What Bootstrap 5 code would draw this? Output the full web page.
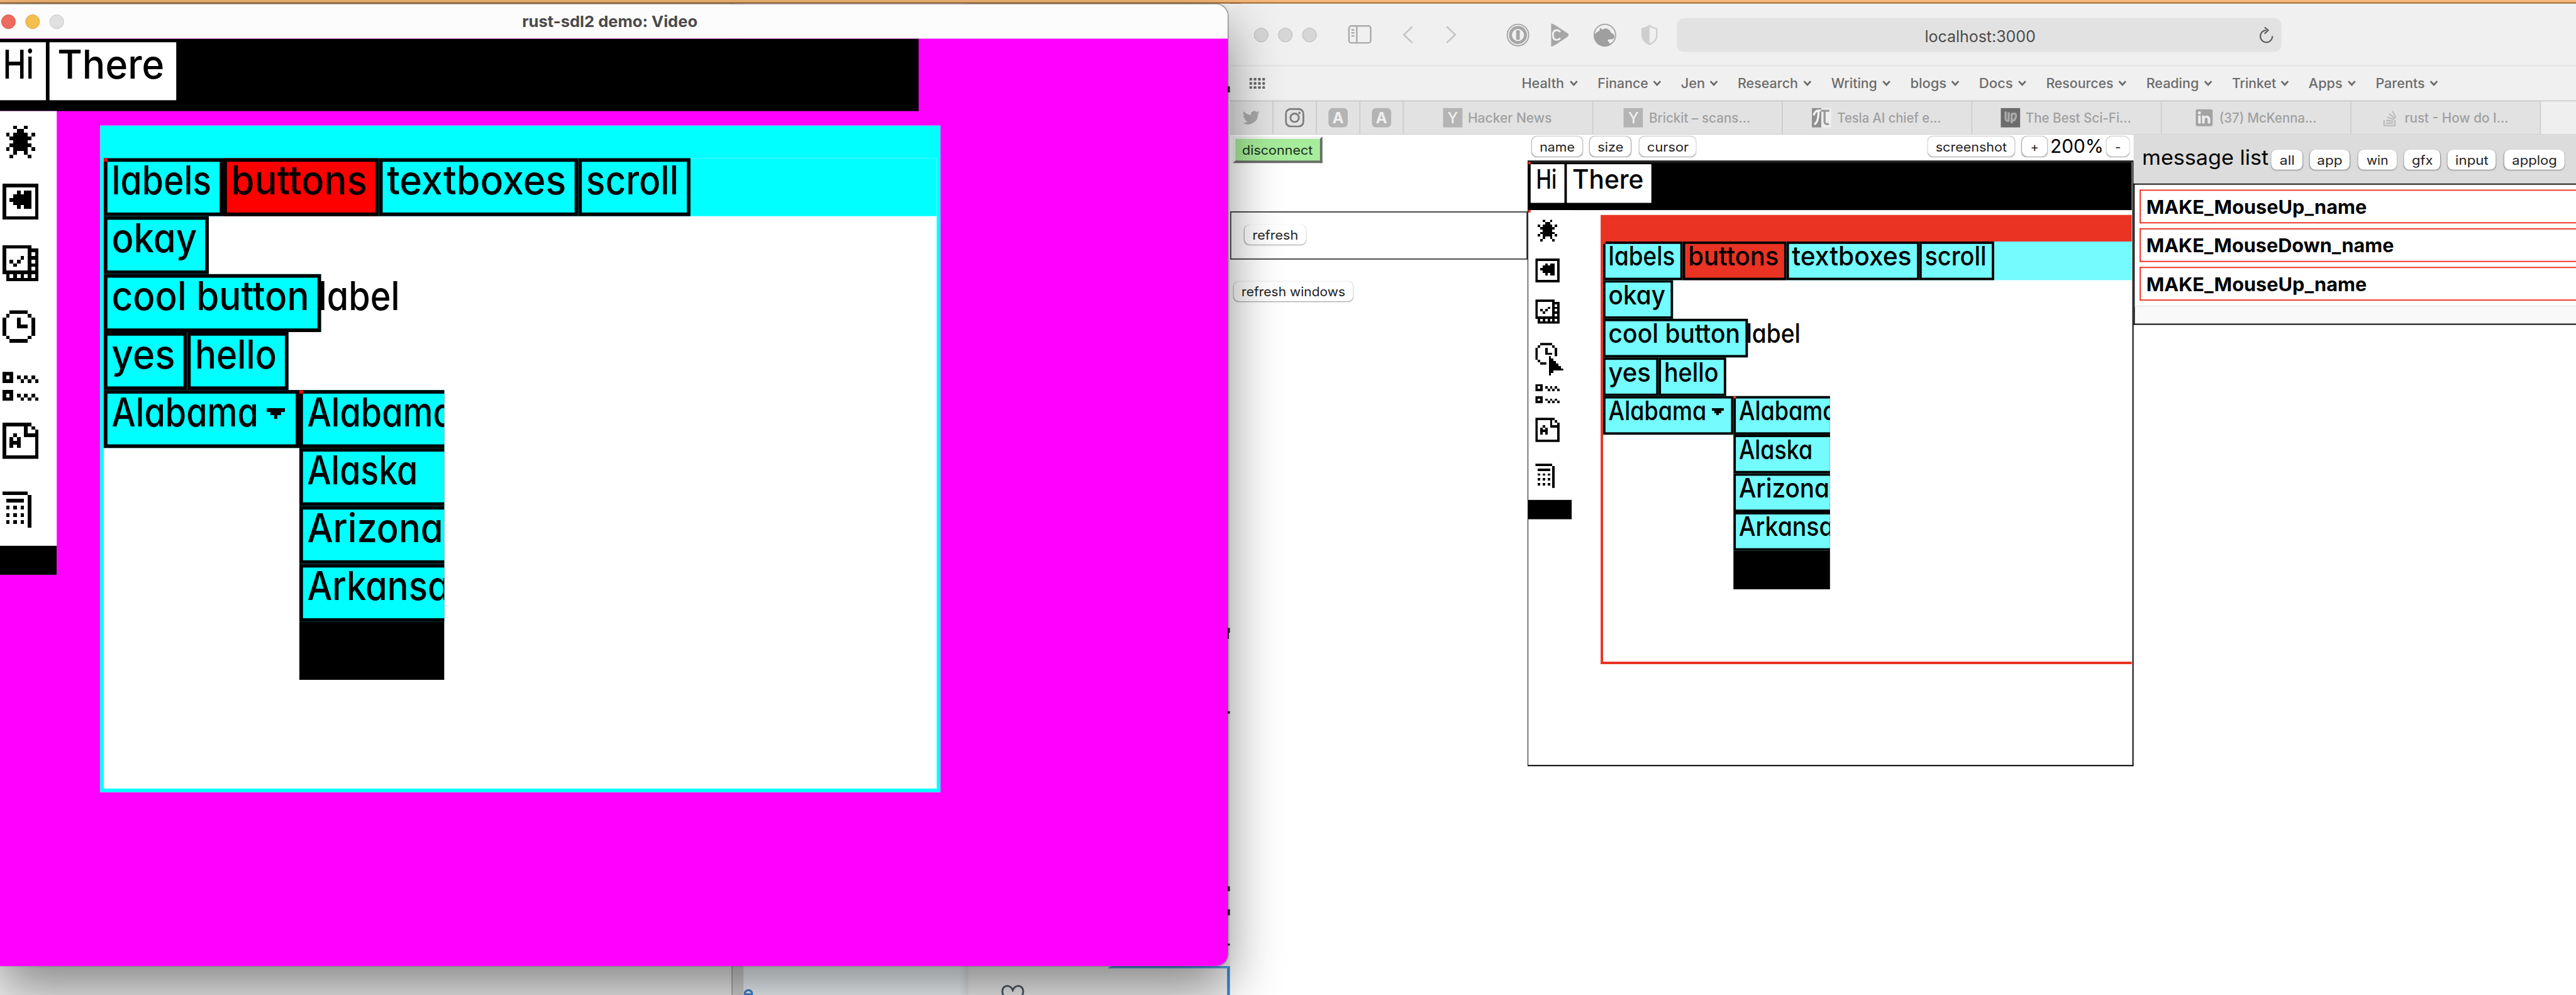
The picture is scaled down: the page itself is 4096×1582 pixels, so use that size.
<!DOCTYPE html>
<html lang="en">
<head>
<meta charset="utf-8">
<title>rust-sdl2 demo</title>
<link href="https://cdn.jsdelivr.net/npm/bootstrap@5.3.0/dist/css/bootstrap.min.css" rel="stylesheet">
<script src="https://cdn.jsdelivr.net/npm/bootstrap@5.3.0/dist/js/bootstrap.bundle.min.js"></script>
<style>
html,body{margin:0;height:100%;overflow:hidden;background:#fff}
.stage{width:4268px;height:1648px;transform-origin:0 0;transform:scale(.9597,.95995);font-family:Inter,"Liberation Sans",sans-serif;background:#f4f4f4;color:#000;overflow:hidden}
.menu-strip{height:6px;background:#f5b878;border-bottom:2px solid #8f5a26}
svg{display:block;flex:none}
.fit{display:inline-block;white-space:nowrap;line-height:1}

/* windows on the desktop */
.behind{left:0;top:6px;width:2038px;height:1642px;background:#f2f2f2}
.behind .pane-a{width:1214px;border-right:2px solid #aaa}
.behind .pane-b{width:18px;background:#d8d8d8}
.behind .pane-c{width:372px;background:linear-gradient(90deg,#f6fafd 96%,#e2e6ea)}
.edge-marks{right:0;top:0}
.focus-line{left:1836px;right:0;bottom:0;height:48px;border-top:4px solid #4d9be0;border-right:5px solid #3a8ad8;border-top-left-radius:10px 4px}
.safari{left:2038px;top:6px;width:2230px;height:1642px;border-radius:20px 0 0 0;background:#fff;overflow:hidden}
.sdl{left:0;top:7px;width:2034px;height:1593px;border-radius:0 20px 20px 0;box-shadow:0 36px 90px rgba(0,0,0,.46),0 0 2px rgba(0,0,0,.5)}
.sdl-clip{border-radius:0 20px 20px 0;overflow:hidden}
.sdl-title{height:57px;background:#fcfcfc;font-size:26px;font-weight:700;color:#4a4a4a}
.lights{left:2px;top:17px;gap:16px}
.dot{width:24px;height:24px;border-radius:50%;border:1px solid}
.sdl-body{height:1536px;background:#f0f}

/* the drawn application, every size in canvas pixels of --u */
.gfx{--win:#0ff;--btn:#0ff;--sel:#f00;font-size:calc(11*var(--u));font-weight:500;font-feature-settings:"cv11";line-height:calc(12*var(--u));color:#000}
.gfx-big{--u:6px;--wy:24;left:-14px;top:0}
.gfx-mini{--u:4px;--wy:22;--win:#ea3323;--btn:#73fbfd;--sel:#ea3323;left:0;top:0}
.gfx .fit{line-height:inherit;vertical-align:top}
.g-menu{width:calc(256*var(--u));height:calc(20*var(--u));padding:var(--u) 0 0 var(--u);gap:var(--u);background:#000}
.g-item{height:calc(16*var(--u));background:#fff;padding-left:calc(3*var(--u))}
.g-tools{width:calc(18*var(--u));height:calc(128*var(--u));background:#fff;border-bottom:calc(8*var(--u)) solid #000;padding:calc(4*var(--u)) 0 0 calc(3*var(--u));gap:calc(7*var(--u))}
.g-tools svg:nth-child(4),.g-tools svg:nth-child(5){margin-top:var(--u)}
.g-tools svg:nth-child(6){margin-top:calc(-1*var(--u))}
.g-tools svg:nth-child(7){margin-top:calc(2*var(--u))}
.g-win{left:calc(30*var(--u));top:calc(var(--wy)*var(--u));width:calc(232*var(--u));height:calc((208 - var(--wy))*var(--u));background:#fff;border:var(--u) solid var(--win);border-top-width:calc((33 - var(--wy))*var(--u))}
.g-tabs{background:var(--btn)}
.g-btn{height:calc(16*var(--u));border:var(--u) solid #000;background:var(--btn);padding-left:calc(2*var(--u));line-height:calc(10*var(--u));flex:none}
.g-sel{background:var(--sel)}
.g-drop{left:calc(54*var(--u));top:calc(64*var(--u));width:calc(40*var(--u));height:calc(80*var(--u));background:#000;overflow:hidden}
.g-drop .g-btn{width:calc(60*var(--u))}
.g-red{width:var(--u);height:var(--u);background:var(--sel);left:0;top:0}
.g-arrow{margin:calc(4*var(--u)) 0 0 calc(3*var(--u))}

/* browser */
.bar{background:#f0f0f0;height:104px;border-bottom:2px solid #e2e2e2}
.favs{background:#f0f0f0;height:56px;font-size:22px;color:#6b6b6b;padding-left:485px;gap:33.6px;font-weight:500}
.fav{gap:9px}
.tabsrow{height:57px;background:#e2e2e2;border-top:2px solid #c9c9c9;border-bottom:1px solid #cfcfcf;font-size:22px;color:#a0a0a0;font-weight:500}
.pin{width:72px;border-right:2px solid #cfcfcf;flex:none}
.btab{width:314px;border-right:2px solid #cfcfcf;gap:11px;padding-right:3px;flex:none}
.fico{width:32px;height:32px;background:#b4b4b4;color:#f0f0f0;font-size:25px;line-height:32px;text-align:center}
.url{left:740px;top:24px;width:1002px;height:56px;border-radius:12px;background:#e2e2e2;color:#4c4c4c;font-size:26px}
.pg{font-size:21px}
.mbtn{height:33px;border-radius:9px;background:#fff;color:#222;font-size:21px;box-shadow:0 1px 2px rgba(0,0,0,.32),0 0 1px rgba(0,0,0,.15);padding:7px 0 0;flex:none;line-height:1}
.left-col{width:493px}
.disc{width:148px;height:44px;margin:3px 0 0 5px;background:#a6ec9a;border:4px solid;border-color:#f4f4f4 #6b6b6b #6b6b6b #f4f4f4;color:#1b2b1b}
.rbox{margin-top:80px;height:80px;border:2px solid #444;padding:20px 0 0 22px}
.mid-col{width:1004px}
.canvas-box{width:1004px;height:1003px;border:2px solid #000;border-left-width:1px;background:#fff}
.canvas-clip{width:1000px;height:999px;overflow:hidden}
.g-cursor{left:30px;top:322px;background:#fff;padding:0 4px 2px}
.msg-head{height:81px;background:#dcdcdc;font-size:34px}
.msg-list{height:234px;border:2px solid #000;border-right:0;background:#f9f9f9}
.msg-in{height:202px;background:#fff;border-bottom:2px solid #e8e8e8;padding:8px 0 0 8px;gap:8px}
.msg{height:56px;border:2px solid #ea3323;border-right:0;font-size:31px;font-weight:700;padding-left:11px}
</style>
</head>
<body>
<template id="app">
  <div class="g-menu d-flex">
    <div class="g-item" style="width:calc(14*var(--u))"><span class="fit" data-u="7">Hi</span></div>
    <div class="g-item" style="width:calc(35*var(--u))"><span class="fit" data-u="28">There</span></div>
  </div>
  <div class="g-tools d-flex flex-column">
    <svg data-bits="...#..#...|....##....|.#.####.#.|..######..|...####...|..######..|.#.####.#.|...#..#...|..#....#.."></svg>
    <svg data-bits="##########|#........#|#...#.##.#|#..#####.#|#.######.#|#..#####.#|#...#.##.#|#........#|#........#|##########"></svg>
    <svg data-bits="########..|#......###|#......#.#|#....#.###|#.#.#..#.#|#..#...###|#......#.#|##########|.#.#.#.#.#|.#########"></svg>
    <svg data-bits="..#####...|.#.....#..|#...#...#.|#...#...#.|#...###.#.|#.......#.|#.......#.|.#.....#..|..#####..."></svg>
    <svg data-bits="###.......|#.#.#.#.#.|###..#.#.#|..........|..........|###.......|#.#.#.#.#.|###..#.#.#"></svg>
    <svg data-bits="########..|#.....#.#.|#.....#..#|#..#..####|#.#.#....#|#.###....#|#.#.#....#|#........#|#........#|##########"></svg>
    <svg data-bits="#######...|.......#..|.#####.#..|.......#..|.#.#.#.#..|.......#..|.#.#.#.#..|.......#..|.#.#.#.#..|.......#.."></svg>
  </div>
  <div class="g-win position-absolute">
    <div class="g-tabs d-flex">
      <div class="g-btn" style="width:calc(33*var(--u))"><span class="fit" data-u="26">labels</span></div>
      <div class="g-btn g-sel" style="width:calc(43*var(--u))"><span class="fit" data-u="36">buttons</span></div>
      <div class="g-btn" style="width:calc(55*var(--u))"><span class="fit" data-u="48">textboxes</span></div>
      <div class="g-btn" style="width:calc(31*var(--u))"><span class="fit" data-u="24">scroll</span></div>
    </div>
    <div class="d-flex"><div class="g-btn" style="width:calc(29*var(--u))"><span class="fit" data-u="22">okay</span></div></div>
    <div class="d-flex">
      <div class="g-btn" style="width:calc(60*var(--u))"><span class="fit" data-u="53">cool button</span></div>
      <span class="fit" data-u="21">label</span>
    </div>
    <div class="d-flex">
      <div class="g-btn" style="width:calc(23*var(--u))"><span class="fit" data-u="16">yes</span></div>
      <div class="g-btn" style="width:calc(28*var(--u))"><span class="fit" data-u="21">hello</span></div>
    </div>
    <div class="g-btn d-flex" style="width:calc(54*var(--u))"><span class="fit" data-u="39">Alabama</span><svg class="g-arrow" data-bits="#####|.###.|..#.."></svg></div>
    <div class="g-drop position-absolute">
      <div class="g-btn"><span class="fit" data-u="39">Alabama</span></div>
      <div class="g-btn"><span class="fit" data-u="29">Alaska</span></div>
      <div class="g-btn"><span class="fit" data-u="36">Arizona</span></div>
      <div class="g-btn"><span class="fit" data-u="43">Arkansas</span></div>
      <div class="g-red position-absolute"></div>
    </div>
    <div class="g-red position-absolute"></div>
  </div>
</template>

<div class="stage position-relative">
  <div class="menu-strip"></div>

  <div class="behind position-absolute d-flex align-items-end">
    <div class="pane-a h-100"></div><div class="pane-b h-100"></div>
    <div class="pane-c h-100 d-flex align-items-end"><svg width="16" height="10" viewBox="0 0 16 10"><path d="M2 12V8a6 6 0 0 1 12 0v4M3 9h10" fill="none" stroke="#3a8ad8" stroke-width="3.5"/></svg></div>
    <div class="pane-d h-100 flex-grow-1 d-flex align-items-end"><svg width="100" height="17" viewBox="0 0 100 17"><path d="M74 34C50 18 55 2 65 2q6 0 9 7 3-7 9-7c10 0 15 16-9 32" fill="none" stroke="#4d5b6b" stroke-width="3"/></svg></div>
    <svg class="edge-marks position-absolute" width="4" height="1594" fill="#222"><rect y="137" width="4" height="10"/><rect y="1034" width="4" height="8"/><rect y="1042" width="2" height="10"/><rect y="1172" width="4" height="4"/><rect y="1462" width="4" height="8"/><rect y="1500" width="4" height="10"/><rect y="1557" width="4" height="3"/></svg>
    <div class="focus-line position-absolute"></div>
  </div>

  <div class="safari position-absolute">
    <div class="bar position-relative">
      <svg width="740" height="104" viewBox="2038 6 740 104" fill="none">
        <g fill="#d6d6d6" stroke="#b9b9b9"><circle cx="2089.6" cy="58" r="11.5"/><circle cx="2129.6" cy="58" r="11.5"/><circle cx="2169.6" cy="58" r="11.5"/></g>
        <g stroke="#a9a9a9" stroke-width="2.5"><rect x="2235" y="43" width="36" height="28" rx="4"/><path d="M2248 43v28M2239 49.500h5M2239 54.500h5M2239 59.500h5"/></g>
        <path d="M2340 44l-14 13.500 14 13.500M2397 44l14 13.500-14 13.500" stroke="#c6c6c6" stroke-width="2.800"/>
        <g><circle cx="2515" cy="58" r="17.800" stroke="#a6a6a6" stroke-width="2"/><circle cx="2515" cy="58" r="12.500" stroke="#a6a6a6" stroke-width="5"/><rect x="2512" y="50" width="6" height="16" rx="1" fill="#a6a6a6"/></g>
        <path d="M2570 39q3 0 12 6l15 10q4 3 0 6l-15 10q-9 6-12 6z" fill="#a6a6a6"/><path d="M2585 53q-2-3-6-3-6 0-6 8t6 8q4 0 6-3" stroke="#f0f0f0" stroke-width="3"/>
        <circle cx="2659" cy="58" r="17.800" stroke="#a6a6a6" stroke-width="2"/><path d="M2650 75q-10-6-8-17 2-5 8-7l1-5 4 3 5-2q7 1 9 7 6 3 6 7-1 5-8 4-4 0-3 3l5 6q-8 6-19 1z" fill="#9f9f9f"/>
        <path d="M2733 42.500q5 4 12 5v12q0 9-12 14-12-5-12-14v-12q7-1 12-5z" stroke="#cecece" stroke-width="2.500"/><path d="M2733 42.500q-5 4-12 5v12q0 9 12 14z" fill="#cecece"/>
      </svg>
      <div class="url position-absolute d-flex align-items-center justify-content-center"><span class="fit" data-w="180" style="margin:5px 0 0 4px">localhost:3000</span>
        <svg class="position-absolute" style="right:12px" width="26" height="28" viewBox="0 0 26 28" fill="none" stroke="#5a5a5a" stroke-width="2.200"><path d="M13 6a10 10 0 1 0 10 10M10 1l6 5-6 6"/></svg></div>
    </div>
    <div class="favs d-flex align-items-center position-relative" id="favs">
      <svg class="position-absolute" style="left:32px" width="26" height="18" viewBox="0 0 26 18" fill="#666"><g id="dots"></g></svg>
    </div>
    <div class="tabsrow d-flex align-items-stretch">
      <div class="pin d-flex align-items-center justify-content-center"><svg width="28" height="24" viewBox="0 0 24 20" fill="#a9a9a9"><path d="M23.600 2.400c-.9.400-1.800.6-2.800.8 1-.6 1.800-1.600 2.100-2.700-.9.600-2 1-3.100 1.200A4.900 4.900 0 0 0 11.500 6C7.400 5.900 3.800 3.900 1.400.9.100 3.100.7 6 2.900 7.400c-.8 0-1.500-.2-2.200-.6 0 2.300 1.600 4.300 3.900 4.800-.7.200-1.500.2-2.200.1.600 2 2.400 3.400 4.500 3.400A9.800 9.800 0 0 1 0 17.100 13.900 13.900 0 0 0 21.500 4.700c.8-.6 1.500-1.400 2.100-2.300z"/></svg></div>
      <div class="pin d-flex align-items-center justify-content-center"><svg width="32" height="32" viewBox="0 0 32 32" fill="none" stroke="#7d7d7d" stroke-width="3"><rect x="1.500" y="1.500" width="29" height="29" rx="8"/><circle cx="16" cy="16" r="7"/><circle cx="24" cy="8" r="1" stroke-width="2"/></svg></div>
      <div class="pin d-flex align-items-center justify-content-center"><div class="fico fw-bold" style="border-radius:7px">A</div></div>
      <div class="pin d-flex align-items-center justify-content-center"><div class="fico fw-bold" style="border-radius:7px">A</div></div>
      <div class="btab d-flex align-items-center justify-content-center"><div class="fico">Y</div><span class="fit" data-w="136">Hacker News</span></div>
      <div class="btab d-flex align-items-center justify-content-center"><div class="fico">Y</div><span class="fit" data-w="165">Brickit – scans...</span></div>
      <div class="btab d-flex align-items-center justify-content-center"><div class="fico" style="background:linear-gradient(90deg,#8f8f8f 48%,#efefef 48%)"><svg width="32" height="32" fill="none" stroke-width="3.500"><path d="M3 12q2-8 9-8h18M11 5q0 18-7 22" stroke="#f2f2f2"/><path d="M15 4.500h14M21 5v18q1 5 7 3" stroke="#999"/></svg></div><span class="fit" data-w="169">Tesla AI chief e...</span></div>
      <div class="btab d-flex align-items-center justify-content-center"><div class="fico" style="background:#6c6c6c"><svg width="32" height="32" fill="none" stroke="#aaa" stroke-width="3.500"><path d="M8 6v11q0 5 5 4V7M18 25V10q8-3 7 4t-7 7"/></svg></div><span class="fit" data-w="172">The Best Sci-Fi...</span></div>
      <div class="btab d-flex align-items-center justify-content-center"><svg width="32" height="32"><rect x="2" y="2" width="28" height="28" rx="3" fill="#a3a3a3"/><g fill="#eee"><circle cx="8" cy="8" r="2.500"/><path d="M6 12.500h4.200v13H6zM12.500 12.500h4v2q4-4 8 0 1.500 2 1.500 5v6h-4.200v-6q0-3.500-2.500-3.500t-2.600 3.500v6h-4.200z"/></g></svg><span class="fit" data-w="158">(37) McKenna...</span></div>
      <div class="btab d-flex align-items-center justify-content-center"><svg width="28" height="32" fill="none" stroke="#bdbdbd" stroke-width="2.400"><path d="M4 20v9h18v-9M7 25h12M7.500 20.500l12 1.500M9 15l11.500 4M12.500 9.500l9.500 8M18 5l5.500 11"/></svg><span class="fit" data-w="169">rust - How do I...</span></div>
      <div class="flex-grow-1" style="background:#efefef"></div>
    </div>

    <div class="d-flex pg">
      <div class="left-col">
        <div class="disc"><span class="fit" data-w="114" style="margin:8px 0 0 12px">disconnect</span></div>
        <div class="rbox"><div class="mbtn text-center" style="width:102px"><span class="fit" data-w="73">refresh</span></div></div>
        <div class="mbtn text-center" style="width:198px;margin:36px 0 0 6px"><span class="fit" data-w="169">refresh windows</span></div>
      </div>
      <div class="mid-col">
        <div class="d-flex" style="height:43px;padding:3px 0 0 7px">
          <div class="mbtn text-center" style="width:84px"><span class="fit" data-w="55">name</span></div>
          <div class="mbtn text-center" style="width:68px;margin-left:12px"><span class="fit" data-w="40">size</span></div>
          <div class="mbtn text-center" style="width:94px;margin-left:14px"><span class="fit" data-w="66">cursor</span></div>
          <div class="mbtn text-center ms-auto" style="width:144px"><span class="fit" data-w="115">screenshot</span></div>
          <div class="mbtn text-center" style="width:42px;margin-left:12px">+</div>
          <span class="fit" data-w="84" style="font-size:31px;margin-left:7px">200%</span>
          <div class="mbtn text-center" style="width:38px;margin:0 7px 0 7px">-</div>
        </div>
        <div class="canvas-box"><div class="canvas-clip position-relative">
          <div class="gfx gfx-mini position-absolute" data-app><div class="g-red position-absolute"></div><div class="g-red position-absolute" style="top:80px"></div></div>
          <div class="g-cursor position-absolute" style="--u:4px"><svg data-bits="#.....|##....|###...|####..|#####.|######|##....|#....."></svg></div>
        </div></div>
      </div>
      <div class="flex-grow-1">
        <div class="msg-head d-flex">
          <span class="fit" data-w="205" style="margin:21px 0 0 16px">message list</span>
          <div class="d-flex" style="padding:25px 0 0 7px">
            <div class="mbtn text-center" style="width:52px"><span class="fit" data-w="22">all</span></div>
            <div class="mbtn text-center" style="width:66px;margin-left:12px"><span class="fit" data-w="39">app</span></div>
            <div class="mbtn text-center" style="width:64px;margin-left:14px"><span class="fit" data-w="33">win</span></div>
            <div class="mbtn text-center" style="width:60px;margin-left:12px"><span class="fit" data-w="32">gfx</span></div>
            <div class="mbtn text-center" style="width:80px;margin-left:12px"><span class="fit" data-w="52">input</span></div>
            <div class="mbtn text-center" style="width:100px;margin-left:14px"><span class="fit" data-w="71.5">applog</span></div>
          </div>
        </div>
        <div class="msg-list"><div class="msg-in d-flex flex-column">
          <div class="msg d-flex align-items-center"><span class="fit" data-w="361">MAKE_MouseUp_name</span></div>
          <div class="msg d-flex align-items-center"><span class="fit" data-w="406">MAKE_MouseDown_name</span></div>
          <div class="msg d-flex align-items-center"><span class="fit" data-w="361">MAKE_MouseUp_name</span></div>
        </div></div>
      </div>
    </div>
  </div>

  <div class="sdl position-absolute"><div class="sdl-clip h-100">
    <div class="sdl-title d-flex align-items-center position-relative">
      <div class="lights d-flex position-absolute">
        <div class="dot" style="background:#ed6a5f;border-color:#d8524a"></div>
        <div class="dot" style="background:#f5bf4f;border-color:#d9a23c"></div>
        <div class="dot" style="background:#e0e0e0;border-color:#c4c4c4"></div>
      </div>
      <span class="fit" data-w="287" style="margin-left:867px">rust-sdl2 demo: Video</span>
    </div>
    <div class="sdl-body position-relative overflow-hidden"><div class="gfx gfx-big position-absolute" data-app></div></div>
  </div></div>
</div>

<script>
// stamp the drawn application into both views
document.querySelectorAll('[data-app]').forEach(function (v) {
  v.insertBefore(document.getElementById('app').content.cloneNode(true), v.firstChild);
});
// bookmark folders
var chev = '<svg width="15" height="10" viewBox="0 0 15 10" fill="none" stroke="#6b6b6b" stroke-width="3"><path d="M2 1.500l5.500 6 5.500-6"/></svg>';
[['Health',67.5],['Finance',80.7],['Jen',37],['Research',97],['Writing',73],['blogs',57],['Docs',53],['Resources',108.5],['Reading',84],['Trinket',70],['Apps',53],['Parents',78.5]].forEach(function (f) {
  document.getElementById('favs').insertAdjacentHTML('beforeend', '<div class="fav d-flex align-items-center"><span class="fit" data-w="' + f[1] + '">' + f[0] + '</span>' + chev + '</div>');
});
var dots = '';
for (var r = 0; r < 3; r++) for (var c = 0; c < 4; c++) dots += '<rect x="' + c * 7.2 + '" y="' + r * 7 + '" width="4.400" height="4.400" rx="1"/>';
document.getElementById('dots').innerHTML = dots;
// one-bit icons
document.querySelectorAll('svg[data-bits]').forEach(function (s) {
  var rows = s.dataset.bits.split('|'), w = rows[0].length, h = rows.length, d = '';
  rows.forEach(function (row, y) {
    row.replace(/#+/g, function (m, x) { d += 'M' + x + ' ' + y + 'h' + m.length + 'v1h-' + m.length + 'z'; });
  });
  s.setAttribute('viewBox', '0 0 ' + w + ' ' + h);
  s.setAttribute('shape-rendering', 'crispEdges');
  s.style.width = 'calc(' + w + '*var(--u))';
  s.style.height = 'calc(' + h + '*var(--u))';
  s.innerHTML = '<path d="' + d + '"/>';
});
function fit() {
  document.querySelectorAll('.fit').forEach(function (e) {
    var cs = getComputedStyle(e), fs = parseFloat(cs.fontSize);
    var w = e.dataset.u ? e.dataset.u * parseFloat(cs.getPropertyValue('--u')) : +e.dataset.w;
    var n = e.getBoundingClientRect().width / .9597, b = fs * .07, k = (w + 2 * b) / n;
    e.style.transformOrigin = '0 0';
    e.style.transform = 'scaleX(' + k + ')';
    e.style.marginLeft = (parseFloat(cs.marginLeft) - b) + 'px';
    e.style.marginRight = (w + b - n) + 'px';
  });
}
fit();
</script>
</body>
</html>
